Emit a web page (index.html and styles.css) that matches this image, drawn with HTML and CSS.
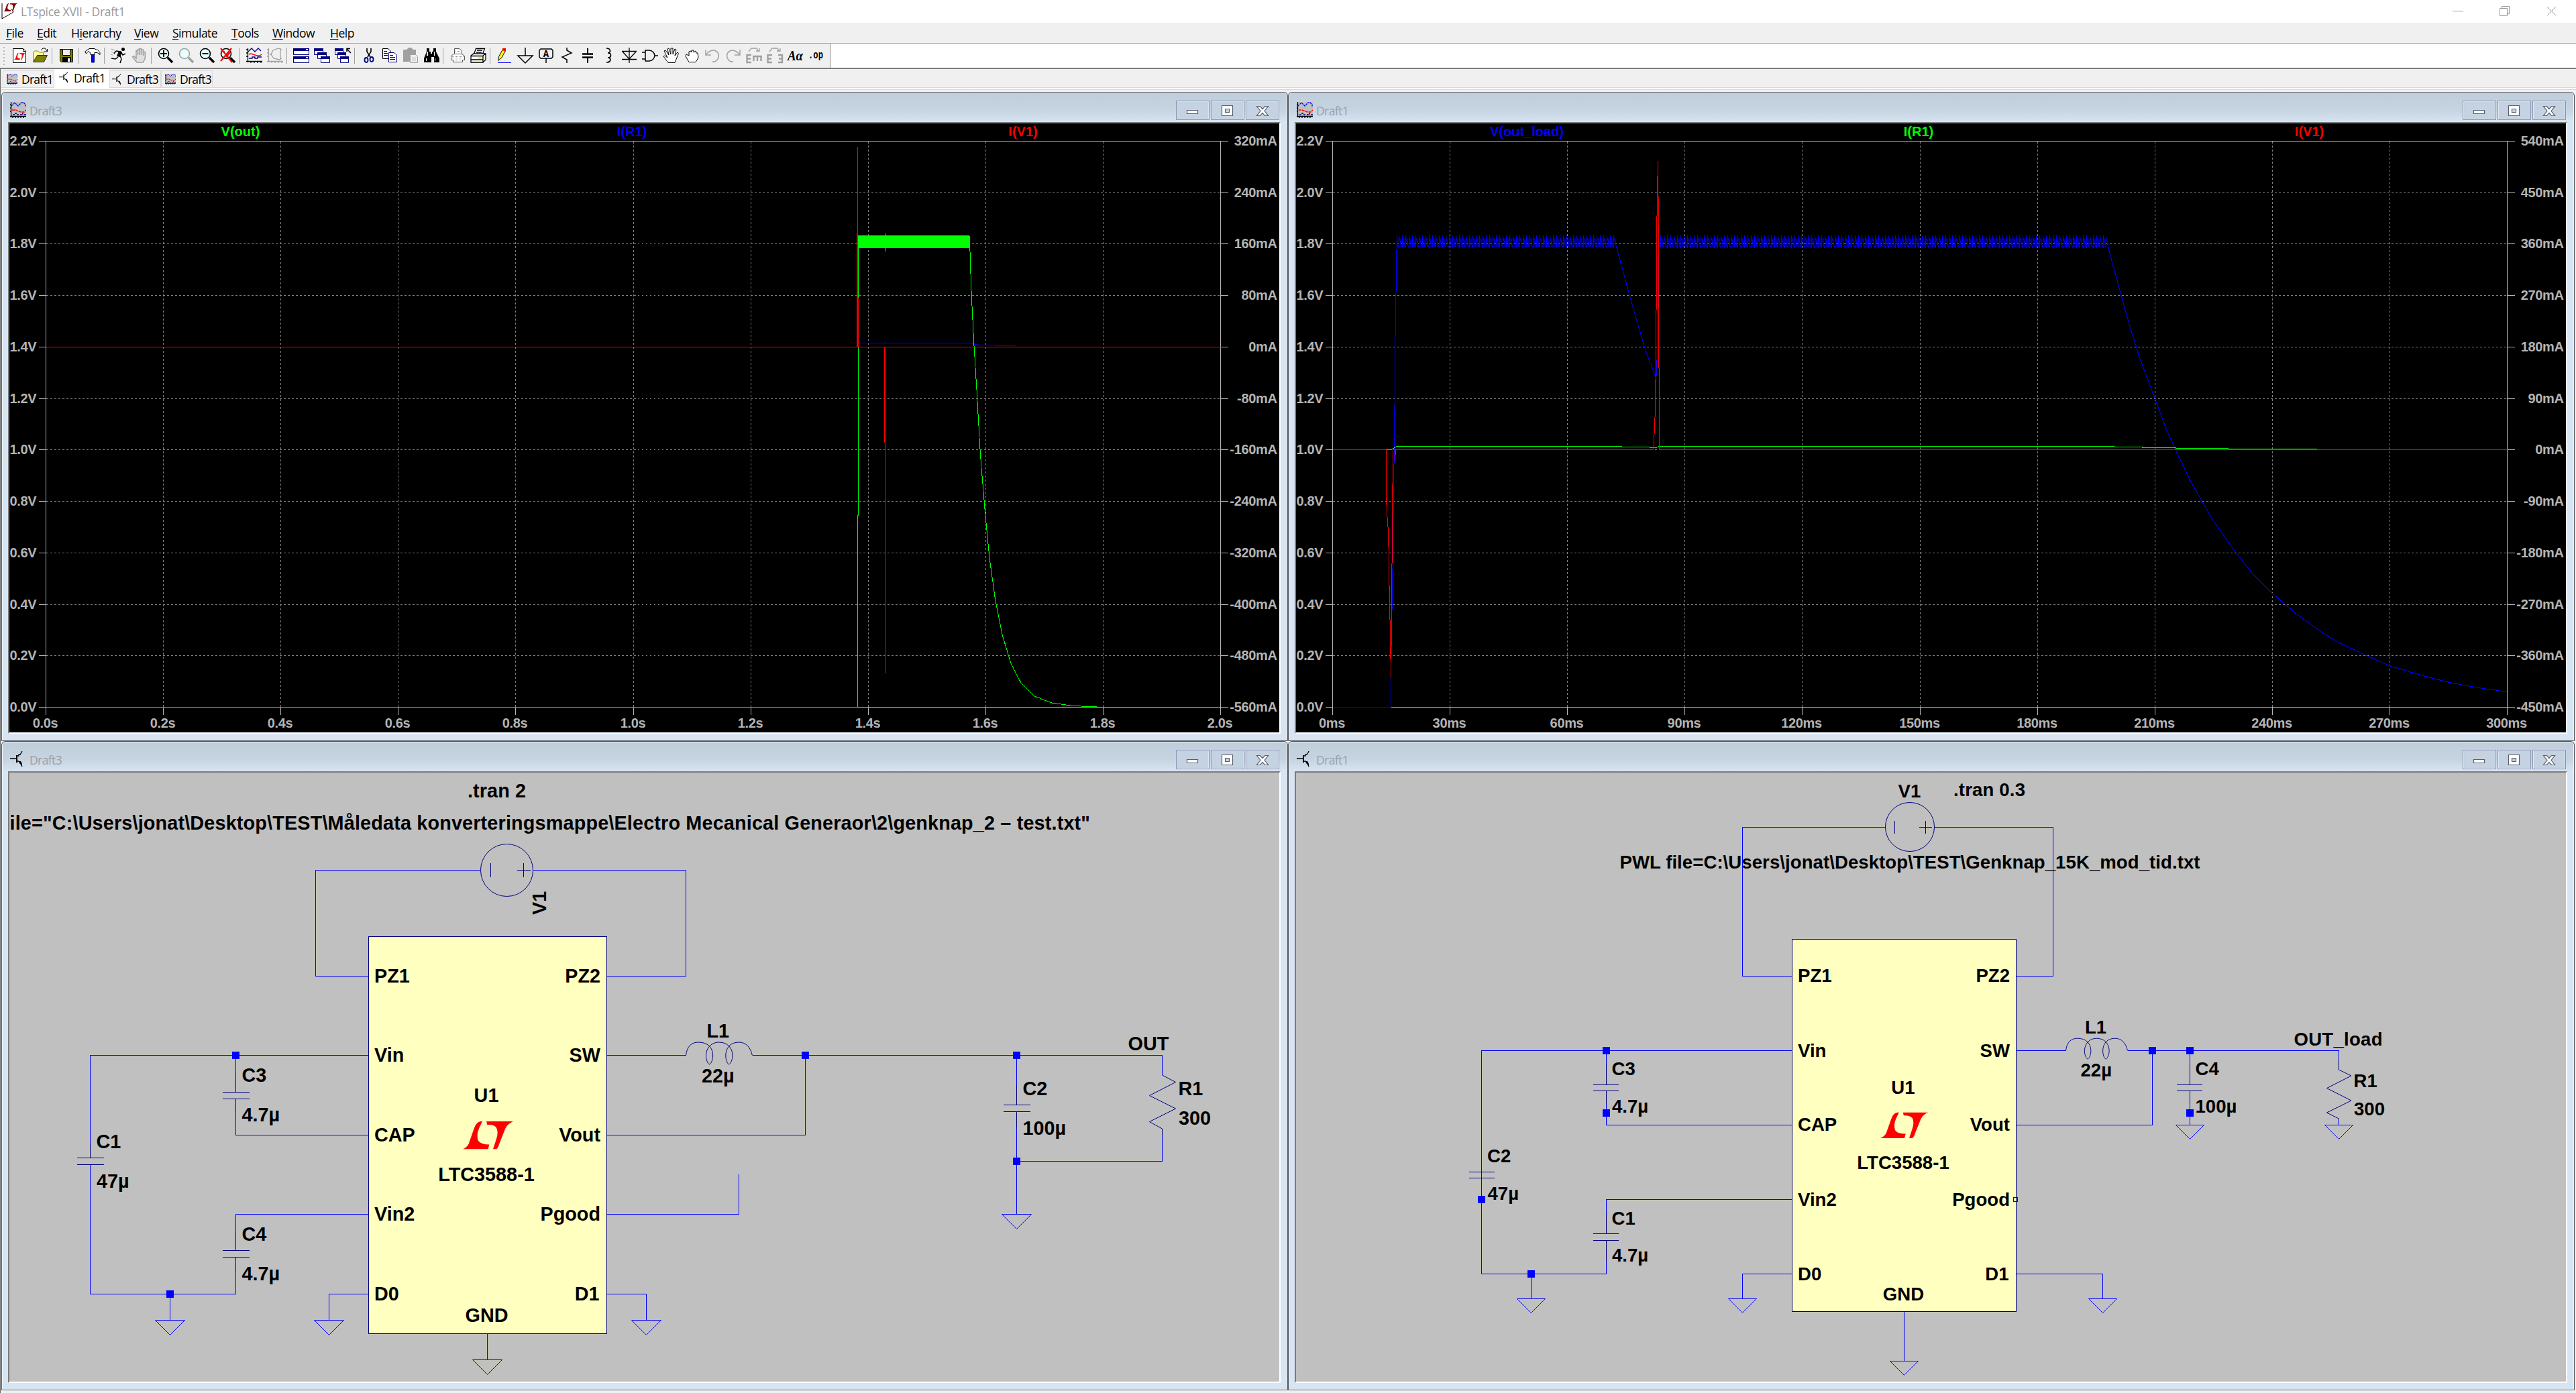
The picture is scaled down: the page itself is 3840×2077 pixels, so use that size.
FILE: index.html
```html
<!DOCTYPE html>
<html lang="en">
<head>
<meta charset="utf-8">
<title>LTspice XVII - Draft1</title>
<link rel="stylesheet" href="styles.css">
</head>
<body>
<svg class="defs" width="0" height="0" aria-hidden="true">
  <defs>
    <symbol id="lt" viewBox="0 0 123 72" preserveAspectRatio="none">
      <path d="M0 72Q10 68 15 58L28 18Q33 2 44 0H48L40 18Q33 36 38 50Q44 60 65 60L62 72Z"/>
      <path d="M58 0H123Q110 6 104 18L90 56Q86 70 82 72H74L82 46Q88 28 82 16Q76 8 60 9Z"/>
    </symbol>
    <symbol id="wave" viewBox="0 0 24 24">
      <path fill="#c0c0c0" d="M1 0h23v22H1z"/>
      <path fill="none" stroke="#00f" stroke-width="1.3" stroke-dasharray="3 1" d="M2 6l5-5 5 5 5-5h3l3 3v3"/>
      <path fill="none" stroke="#f00" stroke-width="1.5" stroke-dasharray="4 1" d="M3 12h5l8 3h5l3-3"/>
      <path fill="none" stroke="#000080" stroke-width="1.3" stroke-dasharray="3 2" d="M4 19h4v-2h2v2h7v-2h2v2h5"/>
      <path fill="none" stroke="#000" stroke-width="1.3" d="M1.500 0v23M0 21.500h24M4 21v3M8 21v3M12 21v3M16 21v3M20 21v3M0 4h2M0 9h2M0 14h2"/>
    </symbol>
    <symbol id="bjt" viewBox="0 0 24 24">
      <path fill="none" stroke="#000" stroke-width="1.300" d="M0 11h10M11 7h2v-2h2l2-3 1-2M11 15h2l3 3 2 5"/>
      <path d="M9 6h2v11H9zM13 15h3l2 4v3l-4-4z"/>
    </symbol>
    <symbol id="lens" viewBox="0 0 24 24">
      <circle cx="9" cy="9" r="7.500" fill="#e8ffff" stroke="currentColor" stroke-width="1.600"/>
      <path stroke="currentColor" stroke-width="3.400" d="M15 15l7 7"/>
    </symbol>
    <symbol id="capt" viewBox="0 0 154 30">
      <g fill="#c4d2e1" stroke="#8390ae"><path d="M.5.5h49v28H.5zM52.500.5h49v28h-49zM104.500.5h49v28h-49z"/></g>
      <g fill="none" stroke="#dce6f2"><path d="M1.500 1.500h47v26h-47zM53.500 1.500h47v26h-47zM105.500 1.500h47v26h-47z"/></g>
      <g fill="#fff" stroke="#5a6070" stroke-width="1.200">
        <path d="M16.500 14.500h16v5h-16zM68.500 7.500h16v15h-16z"/><path fill="#c4d2e1" d="M73.500 12.500h6v5h-6z"/>
        <path d="M120.500 8.500h5l3.500 4 3.500-4h5l-5.500 7 5.500 7h-5l-3.500-4-3.500 4h-5l5.500-7z"/>
      </g>
    </symbol>
    <symbol id="gnd" viewBox="0 0 44 22" overflow="visible"><path fill="none" stroke="#00f" d="M0 0h44L22 22z"/></symbol>
    <pattern id="ripple" width="5" height="19" patternUnits="userSpaceOnUse" y="350.500">
      <path fill="none" stroke="#00f" d="M.5 0V19M.5 3L3 12 5 19M3 5v13"/>
    </pattern>
  </defs>
</svg>

<header class="titlebar">
  <svg class="app-icon" viewBox="0 0 24 24"><path fill="#fff" stroke="#000" d="M1 0v23l17-10-3-5"/><use href="#lt" x="3" y="0" width="21" height="12" fill="#800000"/></svg>
  <span class="app-title">LTspice XVII - Draft1</span>
  <svg class="sys-buttons" viewBox="0 0 160 34"><g fill="none" stroke="#999"><path d="M3 16.500h16M73.500 12.500h11v11h-11zM76.500 12v-2.500h11v11H85M144 10l13 13M157 10l-13 13"/></g></svg>
</header>

<nav class="menubar">
  <span class="m-file"><u>F</u>ile</span><span class="m-edit"><u>E</u>dit</span><span class="m-hier">H<u>i</u>erarchy</span><span class="m-view"><u>V</u>iew</span><span class="m-sim"><u>S</u>imulate</span><span class="m-tools"><u>T</u>ools</span><span class="m-win"><u>W</u>indow</span><span class="m-help"><u>H</u>elp</span>
</nav>

<div class="toolbar">
  <div class="tools">
    <i class="grip"></i>
    <svg viewBox="0 0 24 24"><path fill="#fff" stroke="#000" d="M2.500 1.500h15l4 4v17h-19zM17.500 1.500v4h4"/><use href="#lt" x="4" y="8" width="17" height="10" fill="red"/></svg>
    <svg viewBox="0 0 24 24"><path fill="#ff9" stroke="#880" d="M1.500 20V7l2-2h5l2 2h6v4"/><path fill="#808000" stroke="#330" d="M1.500 21.500l6-10h15l-5 10z"/><path fill="none" stroke="#000" d="M13 4l3-3h3l3 4M22.500 2v4h-5"/></svg>
    <i class="sep"></i>
    <svg viewBox="0 0 24 24"><path fill="#808000" stroke="#000" d="M2.500 2.500h19v19h-17l-2-2z"/><path fill="#efefef" stroke="#000" d="M6.500 2.500h11v9h-11z"/><path d="M6 14h13v8H6z"/><path fill="#fff" d="M14 16h3v5h-3z"/></svg>
    <i class="sep"></i>
    <svg viewBox="0 0 24 24"><path fill="#fff" stroke="#000" d="M.5 6L7 1.500h8l3 2h2l3 4v3l-4-3h-4v3H9V8L5.500 5.500 2.500 9z"/><path fill="#00f" stroke="#000080" d="M10.500 11h4v11h-4z"/></svg>
    <i class="sep"></i>
    <svg viewBox="0 0 24 24"><circle cx="18.500" cy="2.500" r="2.500"/><path fill="none" stroke="#000" stroke-width="1.500" d="M8 5l7 1 3 5 4-2M8 5l-3 4M11 14l-4 3-6-1M14 12l2 5-2 6"/><path d="M12 5l5 2-3 7-5-1z"/><path stroke="#999" d="M1 2l5 2M1 6l4 2M0 10l3 1"/></svg>
    <svg viewBox="0 0 24 24"><path fill="#e0e0e0" stroke="#a0a0a0" stroke-width="1.500" d="M8 22L1.500 14l2-1.500L7 16V4.500h2.500V11 2.500H12V11 1.500h2.500V11 3h3v9V6.500h2.800V16l-3 6z"/></svg>
    <i class="sep"></i>
    <svg viewBox="0 0 24 24"><use href="#lens"/><path stroke="#000" stroke-width="2" d="M4 9h10M9 4v10"/></svg>
    <svg viewBox="0 0 24 24" class="off"><use href="#lens"/></svg>
    <svg viewBox="0 0 24 24"><use href="#lens"/><path stroke="#000" stroke-width="2" d="M4.500 9h9"/></svg>
    <svg viewBox="0 0 24 24"><use href="#lens"/><path stroke="red" stroke-width="2.200" d="M1 1l17 21M17 1L1 20M1 6h6M9 14l6-7"/></svg>
    <i class="sep"></i>
    <svg viewBox="0 0 24 24"><g fill="none"><path stroke="#000080" stroke-width="1.300" d="M3 6l5-5 5 5 5-5 4 4M4 16h5v-2h4v2h4v-2h6"/><path stroke="red" stroke-width="1.500" d="M4 10l3-1 9 3h4l3-2"/><path stroke="#000" stroke-width="1.300" d="M2.500 1v21M0 20.500h24M0 3h3M0 8h3M0 13h3M7 20v3M12 20v3M17 20v3M22 20v3"/></g></svg>
    <svg viewBox="0 0 24 24"><path fill="none" stroke="#a0a0a0" stroke-width="1.300" d="M2.500 1v21M0 20.500h24M0 3h3M0 8h3M0 13h3M7 20v3M12 20v3M17 20v3M22 20v3M22 3l-5-2-8 3-3 6 4 6 8 2 4-2M20 1v17M4 10h3"/></svg>
    <i class="sep"></i>
    <svg viewBox="0 0 24 24"><g fill="#000080"><path d="M0 1h24v11H0zM0 13h24v10H0z"/></g><path fill="#fff" d="M1 5h22v5H1zM1 17h22v5H1z"/><path fill="#efefef" d="M0 11h24v1.500H0z"/><path fill="#fff" d="M19 2h3v2h-3zM19 14h3v2h-3z"/></svg>
    <svg viewBox="0 0 24 24"><g fill="#fff" stroke="#000080"><path d="M.5 1.500h13v9H.5zM5.500 7.500h13v9h-13zM10.500 13.500h13v9h-13z"/></g><path fill="#000080" d="M0 1h14v4H0zM5 7h14v4H5zM10 13h14v4H10z"/></svg>
    <svg viewBox="0 0 24 24"><g fill="#fff" stroke="#000080"><path d="M.5 1.500h12v9H.5zM4.500 7.500h12v9h-12zM8.500 13.500h12v9h-12z"/></g><path fill="#000080" d="M0 1h13v4H0zM4 7h13v4H4zM8 13h13v4H8z"/><path fill="none" stroke="#000" stroke-width="1.500" d="M24 8l-6-6M18 6V1.500h5"/></svg>
    <i class="sep"></i>
    <svg viewBox="0 0 24 24"><path fill="none" stroke="#000" stroke-width="1.600" d="M9 1v5l5 8M15 1v5l-5 8"/><g fill="none" stroke="#000080" stroke-width="1.800"><ellipse cx="8" cy="18.500" rx="2.500" ry="3.500"/><ellipse cx="16" cy="17.500" rx="2.500" ry="3.500"/></g></svg>
    <svg viewBox="0 0 24 24"><g fill="#fff"><path stroke="#000" d="M1.500 1.500h8l4 4v11h-12z"/><path stroke="#000080" d="M10.500 7.500h8l4 4v10h-12z"/></g><path stroke="#000" d="M3 5.500h5M3 8.500h6M3 11.500h6"/><path stroke="#000080" d="M12 11.500h5M12 14.500h8M12 17.500h8"/></svg>
    <svg viewBox="0 0 24 24"><path fill="#a0a0a0" d="M1 3h5l3-3h4l3 3h4v18H1z"/><path fill="#efefef" stroke="#a0a0a0" d="M11.500 10.500h8l3 3v9h-11z"/><path stroke="#a0a0a0" d="M14 15.500h6M14 18.500h6"/></svg>
    <svg viewBox="0 0 24 24"><path d="M5 1h4v5h2v3h2V6h2V1h4v5l5 10v6h-8v-8h-4v8H1v-6l4-10z"/><path fill="#fff" d="M6 6h1v6H5zM16 6h1v6h-1zM4 16h1v4H4zM17 16h1v4h-1z"/></svg>
    <i class="sep"></i>
    <svg viewBox="0 0 24 24"><path fill="#fff" stroke="#555" d="M7.500 9.500v-8h7l4 3v5M2.500 12.500l4-3h12l4 3v6h-3v3h-14v-3h-3z"/><path stroke="#888" stroke-dasharray="1 1" d="M4 13.500h17M4 15.500h17M6 18.500h12M9 5.500h8"/></svg>
    <svg viewBox="0 0 24 24"><path fill="#fff" stroke="#000" stroke-width="1.300" d="M5.500 9.500l3-8h13l-3 8M1 12l4-3h18v9l-4 4H1zM1 12.500h18v9M19 12l4-3M10 4h8M9 7h8M1 18h18"/><path stroke="#dd0" stroke-width="2" d="M12 15.500h4"/></svg>
    <i class="sep"></i>
    <svg viewBox="0 0 24 24"><path fill="#ff0" stroke="#000" d="M2.500 19.500l1-6 6-11 4 2-6 11z"/><path fill="red" d="M9 1l5 0v5l-5-2z"/><path stroke="#00f" d="M2 22.500h20"/></svg>
    <svg viewBox="0 0 24 24"><path fill="none" stroke="#000" stroke-width="1.500" d="M12 0v12M1 12h22L12 23z"/></svg>
    <svg viewBox="0 0 24 24"><path fill="none" stroke="#000" stroke-width="1.500" d="M4 2h16l2 2v10l-2 2H4l-2-2V4zM12 16v7"/><text x="12" y="13.500" font-family="Liberation Mono" font-weight="bold" font-size="14" text-anchor="middle">A</text></svg>
    <svg viewBox="0 0 24 24"><path fill="none" stroke="#000" stroke-width="1.500" d="M12 0v4l7 4L5 14l7 4v5"/></svg>
    <svg viewBox="0 0 24 24"><path fill="none" stroke="#000" stroke-width="2" d="M12 1v8M12 14v9"/><path stroke="#000" stroke-width="2.600" d="M4 9.500h16M4 14.500h16"/></svg>
    <svg viewBox="0 0 24 24"><path fill="none" stroke="#000" stroke-width="1.700" d="M9 1c7 0 7 7 2 7 6 0 6 7 0 7 6 0 5 7-2 7"/></svg>
    <svg viewBox="0 0 24 24"><path fill="none" stroke="#000" stroke-width="1.300" d="M12 0v23M1 5.500h22M2 6l10 11L22 6M1 17.500h22"/></svg>
    <svg viewBox="0 0 24 24"><path fill="none" stroke="#000" stroke-width="1.500" d="M5 4h6q7 1 8 8-1 7-8 8H5zM0 7h5M0 17h5M19 12h5"/></svg>
    <svg viewBox="0 0 24 24"><path fill="#fff" stroke="#000" d="M8 22.500L1 13l2-1 4 3L2 5l2-1 5 7L7 2l2-1 3 9V1h3v9l3-8 2 1-2 9 4-5 1.500 1.500L18 22.500z"/></svg>
    <svg viewBox="0 0 24 24"><path fill="#fff" stroke="#000" d="M8 21.500L3 13l1-3 4 2V6l3-1 1 2V4h3v3l3-2 1 3 2 0 1 7-4 6.500z"/></svg>
    <svg viewBox="0 0 24 24"><path fill="none" stroke="#a0a0a0" stroke-width="1.500" d="M2 3v8h8M2 11Q8 3 15 4q8 3 6 11-3 7-9 6"/></svg>
    <svg viewBox="0 0 24 24"><path fill="none" stroke="#a0a0a0" stroke-width="1.500" d="M22 3v8h-8M22 11Q16 3 9 4 1 7 3 15q3 7 9 6"/></svg>
    <svg viewBox="0 0 24 24"><path fill="none" stroke="#a0a0a0" stroke-width="1.300" d="M4 6l4-5h8l3 5M15 5h5V1"/><path fill="none" stroke="#a0a0a0" stroke-width="2.400" d="M8 11H1.500v11H8M1 16.500h6M10 13h14M11.500 12v8M17 12v8M22.500 12v8"/></svg>
    <svg viewBox="0 0 24 24"><path fill="none" stroke="#a0a0a0" stroke-width="1.300" d="M4 6l4-5h8l3 5M15 5h5V1"/><path fill="none" stroke="#a0a0a0" stroke-width="2.400" d="M8 11H1.500v11H8M1 16.500h6M17 11h6v11h-6M18 16.500h5"/></svg>
    <svg viewBox="0 0 24 24"><text x="0" y="19" font-family="Liberation Serif" font-weight="bold" font-style="italic" font-size="21" textLength="23" lengthAdjust="spacingAndGlyphs">Aα</text></svg>
    <svg viewBox="0 0 24 24"><text x="0" y="16" font-family="Liberation Mono" font-weight="bold" font-size="17" textLength="22" lengthAdjust="spacingAndGlyphs">.op</text></svg>
  </div>
</div>

<div class="tabs">
  <span class="tab"><svg viewBox="0 0 24 24"><use href="#wave"/></svg>Draft1</span>
  <span class="tab active"><svg viewBox="0 0 24 24"><use href="#bjt"/></svg>Draft1</span>
  <span class="tab third"><svg viewBox="0 0 24 24"><use href="#bjt"/></svg>Draft3</span>
  <span class="tab"><svg viewBox="0 0 24 24"><use href="#wave"/></svg>Draft3</span>
</div>

<main class="mdi">
  <section class="window">
    <div class="caption"><svg class="doc" viewBox="0 0 24 24"><use href="#wave"/></svg><span>Draft3</span><svg class="buttons" viewBox="0 0 154 30"><use href="#capt"/></svg></div>
    <svg class="view plot" viewBox="14 184 1893 908">
      <g id="axes-left"></g>
      <g class="legend"><text x="358.500" y="203" fill="#0f0">V(out)</text><text x="942" y="203" fill="#00f">I(R1)</text><text x="1525" y="203" fill="red">I(V1)</text></g>
      <g class="trace">
        <path stroke="#00f" d="M1278 516L1280 511.500H1446L1459 514.500H1483V515.500H1514"/>
        <path stroke="#0f0" d="M68.500 1054.500H1278.500V768H1279.500V351M1319.500 348V375M1445.500 352L1446.500 397 1448.500 446 1451.500 507 1456 581 1461.500 679 1468.500 764.500 1475 832 1483.500 893 1494.500 948 1507 989 1521.500 1017.500 1542 1038 1567.500 1048 1599.500 1052.500 1635 1054"/>
        <path fill="#0f0" d="M1279 351H1445V370H1279z"/>
        <path stroke="red" d="M68.500 517.500H1819.500M1278.500 219V517M1277.500 348V517M1279.500 444V517M1319.500 517V1004M1318.500 517V660"/>
      </g>
    </svg>
  </section>

  <section class="window">
    <div class="caption"><svg class="doc" viewBox="0 0 24 24"><use href="#wave"/></svg><span>Draft1</span><svg class="buttons" viewBox="0 0 154 30"><use href="#capt"/></svg></div>
    <svg class="view plot" viewBox="1932 184 1893 908">
      <g id="axes-right"></g>
      <g class="legend"><text x="2276" y="203" fill="#00f">V(out_load)</text><text x="2860" y="203" fill="#0f0">I(R1)</text><text x="3442.500" y="203" fill="red">I(V1)</text></g>
      <g class="trace">
        <path fill="url(#ripple)" d="M2082 350.500H2407V369H2082zM2473 350.500H3140V369.500H2473z"/>
        <path stroke="#00f" d="M1986.500 1054.500H2073.500V1010L2074.700 928 2076 849 2077.300 743 2078.600 649 2079.900 508 2081.800 385 2082.400 350M2407.700 355L2408.900 365.400 2419.800 406 2435.700 463.400 2452.300 520.300 2468.900 564.300 2470.200 532 2471.500 415 2472.500 350M3140 355L3144.400 375.700 3161.900 440 3175.600 489 3190 535 3212.500 595 3228.800 639 3243 670.200 3266 718.600 3297.500 773.700 3331.900 822.700 3360 857.600 3387.500 885 3422.500 915 3460 942 3485 957.400 3525 976.300 3562.500 993 3610 1007 3647.500 1016.800 3697.500 1026 3737.500 1031.500"/>
        <path stroke="#0f0" d="M2066 670.500H2074L2082 665.500H2417V666.500H2459V667.500H2469L2473 665.500H3151V666.500H3193V667.500H3243V668.500H3321V669.500H3454"/>
        <path stroke="red" d="M1986.500 670.500H2066L2066.500 743 2068.400 778 2069.600 792.600 2070.900 867.700 2072.200 934 2073.500 1010 2074.700 901.700 2075.400 766.800 2076.700 670.500H2079.500V687L2080.500 670.500H2465L2467.600 608 2468.900 479 2470.200 297.400 2471.500 240.500 2472.100 302 2472.700 514.500 2473.400 590 2474 670.500H3737.500"/>
      </g>
    </svg>
  </section>

  <section class="window">
    <div class="caption"><svg class="doc" viewBox="0 0 24 24"><use href="#bjt"/></svg><span>Draft3</span><svg class="buttons" viewBox="0 0 154 30"><use href="#capt"/></svg></div>
    <svg class="view schematic" viewBox="14 1152 1893 908">
      <path class="chip" d="M549.500 1396.500H904.500V1988.500H549.500z"/>
      <path class="wire" d="M716 1297.500H470.500V1455.500H549M795 1297.500H1022.500V1455.500H905M134.500 1726V1573.500H549M351.500 1573.500V1628M351.500 1638V1692.500H549M134.500 1737V1929.500H351.500V1875M351.500 1864V1810.500H549M253.500 1929V1968M549 1929.500H490.500V1968M726.500 1988V2027M905 1929.500H963.500V1968M905 1573.500H1022.500M1121.500 1573.500H1732.500V1603M1200.500 1573V1692.500H905M905 1810.500H1101.500V1751M1515.500 1573V1647M1515.500 1658V1810M1515.500 1731.500H1732.500V1683"/>
      <use href="#gnd" x="231.500" y="1968.500" width="44" height="22"/><use href="#gnd" x="468.500" y="1968.500" width="44" height="22"/><use href="#gnd" x="704.500" y="2027.500" width="44" height="22"/><use href="#gnd" x="941.500" y="1968.500" width="44" height="22"/><use href="#gnd" x="1493.500" y="1810.500" width="44" height="22"/>
      <g class="part">
        <ellipse cx="755.500" cy="1297.500" rx="39" ry="39"/>
        <path d="M731.500 1287V1308M780.500 1287V1308M771 1297.500H791M332 1628.500H372M332 1638.500H372M115 1726.500H155M115 1736.500H155M332 1864.500H372M332 1874.500H372M1496 1647.500H1536M1496 1657.500H1536M134.500 1706V1726M351.500 1600V1628M351.500 1639V1660M351.500 1836V1864M351.500 1875V1896M1515.500 1618V1647M1515.500 1658V1680"/>
        <path d="M1732.500 1603L1752.500 1613.500 1713.500 1633.500 1752.500 1653 1713.500 1672.500 1732.500 1683V1692"/>
        <path d="M1022.500 1573.500C1024 1560 1031 1554 1041 1554 1055 1554 1062.700 1562 1062.700 1574 1062.700 1580 1060 1586 1057.600 1587 1055 1586 1052.500 1580 1052.500 1574 1052.500 1562 1061 1554 1071.600 1554 1084 1554 1092 1562 1092 1574 1092 1580 1089 1586 1086.700 1587 1084 1586 1081.800 1580 1081.800 1574 1081.800 1562 1089 1554 1101.600 1554 1112 1554 1119 1562 1121.400 1573.500"/>
      </g>
      <path class="node" d="M346 1568h11v11h-11zM248 1924h11v11h-11zM1195 1568h11v11h-11zM1510 1568h11v11h-11zM1510 1726h11v11h-11z"/>
      <use href="#lt" x="689.500" y="1672" width="75.500" height="41.500" fill="red"/>
      <g class="label">
        <text x="697" y="1189" textLength="87">.tran 2</text>
        <text x="14.500" y="1237" textLength="1610.500">ile="C:\Users\jonat\Desktop\TEST\Måledata konverteringsmappe\Electro Mecanical Generaor\2\genknap_2 – test.txt"</text>
        <text transform="translate(814 1364) rotate(-90)">V1</text>
        <text x="558" y="1464.500">PZ1</text><text x="558" y="1583">Vin</text><text x="558" y="1701.500">CAP</text><text x="558" y="1820">Vin2</text><text x="558" y="1938.500">D0</text>
        <g text-anchor="end"><text x="895" y="1464.500">PZ2</text><text x="895" y="1583">SW</text><text x="895" y="1701.500">Vout</text><text x="895" y="1820">Pgood</text><text x="893.500" y="1938.500">D1</text></g>
        <g text-anchor="middle"><text x="725" y="1642.500">U1</text><text x="725" y="1761">LTC3588-1</text><text x="725.500" y="1971">GND</text></g>
        <text x="360.500" y="1613">C3</text><text x="360.500" y="1672">4.7µ</text><text x="143.500" y="1712">C1</text><text x="144" y="1771">47µ</text><text x="360.500" y="1850">C4</text><text x="360.500" y="1909">4.7µ</text>
        <text x="1053.500" y="1547">L1</text><text x="1046" y="1614">22µ</text><text x="1681.500" y="1566">OUT</text><text x="1524.500" y="1632.500">C2</text><text x="1524.500" y="1692">100µ</text><text x="1756.500" y="1632.500">R1</text><text x="1757" y="1677">300</text>
      </g>
    </svg>
  </section>

  <section class="window">
    <div class="caption"><svg class="doc" viewBox="0 0 24 24"><use href="#bjt"/></svg><span>Draft1</span><svg class="buttons" viewBox="0 0 154 30"><use href="#capt"/></svg></div>
    <svg class="view schematic right" viewBox="1932 1152 1893 908">
      <path class="chip" d="M2671.500 1400.500H3005.500V1955.500H2671.500z"/>
      <g class="label">
        <text x="2829.500" y="1188.500">V1</text><text x="2912" y="1186.500" textLength="107">.tran 0.3</text>
        <text x="2414.500" y="1294.500" textLength="865">PWL file=C:\Users\jonat\Desktop\TEST\Genknap_15K_mod_tid.txt</text>
        <text x="2680" y="1464">PZ1</text><text x="2680" y="1575.500">Vin</text><text x="2680" y="1686">CAP</text><text x="2680" y="1797.500">Vin2</text><text x="2680" y="1908.500">D0</text>
        <g text-anchor="end"><text x="2996" y="1464">PZ2</text><text x="2996" y="1575.500">SW</text><text x="2996" y="1686">Vout</text><text x="2996" y="1797.500">Pgood</text><text x="2994.500" y="1908.500">D1</text></g>
        <g text-anchor="middle"><text x="2837" y="1631">U1</text><text x="2837" y="1742.500">LTC3588-1</text><text x="2837.500" y="1939">GND</text></g>
        <text x="2402.500" y="1603">C3</text><text x="2403" y="1658.500">4.7µ</text><text x="2217" y="1733">C2</text><text x="2217.500" y="1788.500">47µ</text><text x="2402.500" y="1825.500">C1</text><text x="2403" y="1881">4.7µ</text>
        <text x="3108" y="1541">L1</text><text x="3101.500" y="1604.500">22µ</text><text x="3419.500" y="1559" textLength="132">OUT_load</text><text x="3272.500" y="1603">C4</text><text x="3272.500" y="1658.500">100µ</text><text x="3508.500" y="1621">R1</text><text x="3509" y="1663">300</text>
      </g>
      <path class="wire" d="M2810 1233.500H2597.500V1455.500H2671M2884 1233.500H3060.500V1455.500H3006M2671 1566.500H2208.500V1899.500H2394.500V1849M2394.500 1566V1617M2394.500 1627V1677.500H2671M2671 1788.500H2394.500V1839M2282.500 1899V1936M2671 1899.500H2597.500V1936M2838.500 1955V2029M3006 1899.500H3134.500V1936M3006 1566.500H3079.500M3171.500 1566.500H3486.500V1595M3208.500 1566V1677.500H3006M3264.500 1566V1617M3264.500 1627V1677M3486.500 1668V1677M3001.500 1785.500H3007.500V1791.500H3001.500z"/>
      <use href="#gnd" x="2261.500" y="1936.500" width="42" height="21"/><use href="#gnd" x="2576.500" y="1936.500" width="42" height="21"/><use href="#gnd" x="2817.500" y="2029.500" width="42" height="21"/><use href="#gnd" x="3113.500" y="1936.500" width="42" height="21"/><use href="#gnd" x="3243.500" y="1677.500" width="42" height="21"/><use href="#gnd" x="3465.500" y="1677.500" width="42" height="21"/>
      <g class="part">
        <ellipse cx="2847" cy="1233" rx="36.500" ry="36.500"/>
        <path d="M2824.500 1224V1243M2870.500 1224V1243M2861 1233.500H2880M2375 1617.500H2413M2375 1626.500H2413M2190 1747.500H2228M2190 1756.500H2228M2375 1839.500H2413M2375 1849.500H2413M3245 1617.500H3283M3245 1626.500H3283M2394.500 1585V1617M2394.500 1627V1645M2394.500 1810V1839M2394.500 1850V1880M3264.500 1585V1617M3264.500 1627V1645"/>
        <path d="M3486.500 1580V1595L3505 1604 3468.500 1622.500 3505 1641 3468.500 1659 3486.500 1668"/>
        <path transform="translate(3079.500 1566.500) scale(.93 .938) translate(-1022.500 -1573.500)" d="M1022.500 1573.500C1024 1560 1031 1554 1041 1554 1055 1554 1062.700 1562 1062.700 1574 1062.700 1580 1060 1586 1057.600 1587 1055 1586 1052.500 1580 1052.500 1574 1052.500 1562 1061 1554 1071.600 1554 1084 1554 1092 1562 1092 1574 1092 1580 1089 1586 1086.700 1587 1084 1586 1081.800 1580 1081.800 1574 1081.800 1562 1089 1554 1101.600 1554 1112 1554 1119 1562 1121.400 1573.500"/>
      </g>
      <path class="node" d="M2389 1561h11v11h-11zM2389 1654h11v11h-11zM2203 1783h11v11h-11zM2277 1894h11v11h-11zM3203 1561h11v11h-11zM3259 1561h11v11h-11zM3259 1654h11v11h-11z"/>
      <use href="#lt" x="2803" y="1658.500" width="71.500" height="38.500" fill="red"/>
    </svg>
  </section>
</main>
<script src="script.js"></script>
</body>
</html>
```
FILE: styles.css
```css
* { box-sizing: border-box; }
body {
  margin: 0;
  width: 3840px;
  height: 2077px;
  overflow: hidden;
  background: #f0f0f0;
  color: #000;
  font-family: "Open Sans", "Noto Sans", sans-serif;
  font-size: 17.5px;
  display: flex;
  flex-direction: column;
}
.defs { position: absolute; }
svg { display: block; flex: none; }

.titlebar { height: 34px; flex: none; background: #fff; display: flex; align-items: flex-start; padding: 5px 27px 0 2px; color: #999; }
.app-icon { width: 24px; height: 24px; }
.app-title { margin-left: 5px; line-height: 24px; letter-spacing: -0.3px; white-space: nowrap; }
.sys-buttons { width: 160px; height: 34px; margin: -5px 0 0 auto; }

.menubar { height: 31px; flex: none; display: flex; padding-left: 9px; border-bottom: 1px solid #a0a0a0; line-height: 31px; letter-spacing: -0.5px; white-space: nowrap; }
.menubar u { text-underline-offset: 2px; text-decoration-thickness: 1px; }
.m-file { width: 46px; }
.m-edit { width: 51px; }
.m-hier { width: 94px; }
.m-view { width: 57px; }
.m-sim { width: 88px; }
.m-tools { width: 61px; }
.m-win { width: 86px; }
.m-help { width: 50px; }

.toolbar { height: 38px; flex: none; background: #fff; border-bottom: 2px solid #7c7c7c; }
.tools { width: 1239px; height: 36px; padding-left: 4px; background: #f0f0f0; border-right: 1px solid #a0a0a0; display: flex; align-items: center; }
.tools svg { width: 24px; height: 24px; margin: 0 3.5px; overflow: visible; color: #000; }
.tools svg.off { color: #a0a0a0; }
.grip { width: 9px; height: 28px; margin-top: 2px; background: repeating-linear-gradient(#b8b8b8 0 2px, transparent 2px 5px) no-repeat 1px 0 / 2px 100%; }
.sep { width: 8px; height: 24px; background: linear-gradient(#a0a0a0, #a0a0a0) no-repeat 2px 0 / 1px 100%; }

.tabs { height: 31px; flex: none; display: flex; align-items: flex-end; padding: 0 0 3px 3px; border-left: 1px solid #696969; background: linear-gradient(#d9d9d9, #d9d9d9) no-repeat 0 27px / 100% 1px, linear-gradient(#fff, #fff) no-repeat 0 28px / 100% 2px, linear-gradient(#d9d9d9, #d9d9d9) no-repeat 0 30px / 100% 1px, #f0f0f0; }
.tab { width: 77px; height: 26px; display: flex; align-items: center; padding-left: 5px; border: 1px solid #d9d9d9; letter-spacing: -0.8px; white-space: nowrap; }
.tab svg { width: 16px; height: 16px; margin-right: 6px; }
.tab.active { width: 82px; height: 28px; background: #fff; border-color: #fff; padding: 0 0 3px 6px; }
.tab.third { padding-left: 3px; }
.tab.active svg, .tab.third svg { width: 17px; height: 17px; margin-right: 5px; }

.mdi { flex: 1; padding: 3px 2px 4px 1px; border-left: 1px solid #696969; display: grid; grid-template-columns: 1918px 1918px; grid-template-rows: 968px 968px; }
.window {
  border: 1px solid #4c4f54;
  border-radius: 6px 6px 0 0;
  padding: 0 10px 10px 9px;
  background: linear-gradient(#c0cedc 0, #c6d3e0 26px, #d7e4f2 44px);
  box-shadow: inset 0 0 0 1px #e9f1f9;
}
.caption { height: 44px; display: flex; align-items: flex-start; color: #9aa0a8; }
.caption .doc { width: 24px; height: 24px; margin: 14px 5px 0 3px; }
.caption span { margin-top: 15px; line-height: 24px; letter-spacing: -0.6px; }
.caption .buttons { width: 154px; height: 30px; margin: 12px 2px 0 auto; }
.view { width: 1897px; height: 912px; border: 2px solid; border-color: #7c7c7c #fff #fff #7c7c7c; }

.plot { background: #000; font: bold 20px "Liberation Sans", Arial, sans-serif; }
.plot text { fill: #b4b4b4; }
.legend { text-anchor: middle; }
.plot .legend text[fill="#0f0"] { fill: #0f0; }
.plot .legend text[fill="#00f"] { fill: #00f; }
.plot .legend text[fill="red"] { fill: #f00; }
.axis-text { letter-spacing: -0.35px; }
.trace { fill: none; stroke-linejoin: bevel; shape-rendering: crispEdges; }
.grid { fill: none; stroke: #808080; stroke-dasharray: 3 3; shape-rendering: crispEdges; }
.frame { fill: none; stroke: #b4b4b4; shape-rendering: crispEdges; }

.schematic { background: #c0c0c0; }
.chip { fill: #ffffc0; stroke: #000080; shape-rendering: crispEdges; }
.wire { fill: none; stroke: #00f; shape-rendering: crispEdges; }
.part { fill: none; stroke: #000080; }
.node { fill: #00f; }
.label { font: bold 28.8px "Liberation Sans", Arial, sans-serif; }
.right .label { font-size: 27.6px; }
```
FILE: script.js
```js
// Draws the grid, frame, ticks and axis labels of one waveform plot.
const NS = 'http://www.w3.org/2000/svg';
const TOP = 210.5, BOTTOM = 1054.5, STEP_X = 175.1;

function add(parent, name, attrs, text) {
  const el = document.createElementNS(NS, name);
  for (const key in attrs) el.setAttribute(key, attrs[key]);
  if (text !== undefined) el.textContent = text;
  parent.appendChild(el);
}

function drawAxes(id, left, xLabel, rightStart, rightStep) {
  const g = document.getElementById(id);
  const right = Math.round(left + STEP_X * 10) - 0.5;
  let grid = '', ticks = `M${left - 11} ${TOP}H${right + 11}M${left - 11} ${BOTTOM}H${right + 11}M${left} ${TOP}V${BOTTOM + 11}M${right} ${TOP}V${BOTTOM + 11}`;
  for (let i = 0; i <= 11; i++) {
    const y = Math.round(TOP + (BOTTOM - TOP) * i / 11 - 0.5) + 0.5;
    if (i > 0 && i < 11) {
      grid += `M${left} ${y}H${right}`;
      ticks += `M${left - 11} ${y}H${left}M${right} ${y}H${right + 11}`;
    }
    add(g, 'text', { x: left - 54, y: y + 6.5, class: 'axis-text' }, (2.2 - i * 0.2).toFixed(1) + 'V');
    add(g, 'text', { x: left + 1835, y: y + 6.5, class: 'axis-text', 'text-anchor': 'end' }, rightStart - rightStep * i + 'mA');
  }
  for (let i = 0; i <= 10; i++) {
    const x = Math.round(left + STEP_X * i - 0.5) + 0.5;
    if (i > 0 && i < 10) {
      grid += `M${x} ${TOP}V${BOTTOM}`;
      ticks += `M${x} ${BOTTOM}v11`;
    }
    add(g, 'text', { x: x - 1, y: 1085, class: 'axis-text', 'text-anchor': 'middle' }, xLabel(i));
  }
  add(g, 'path', { d: grid, class: 'grid' });
  add(g, 'path', { d: ticks, class: 'frame' });
}

drawAxes('axes-left', 68.5, i => (i * 0.2).toFixed(1) + 's', 320, 80);
drawAxes('axes-right', 1986.5, i => i * 30 + 'ms', 540, 90);
```
